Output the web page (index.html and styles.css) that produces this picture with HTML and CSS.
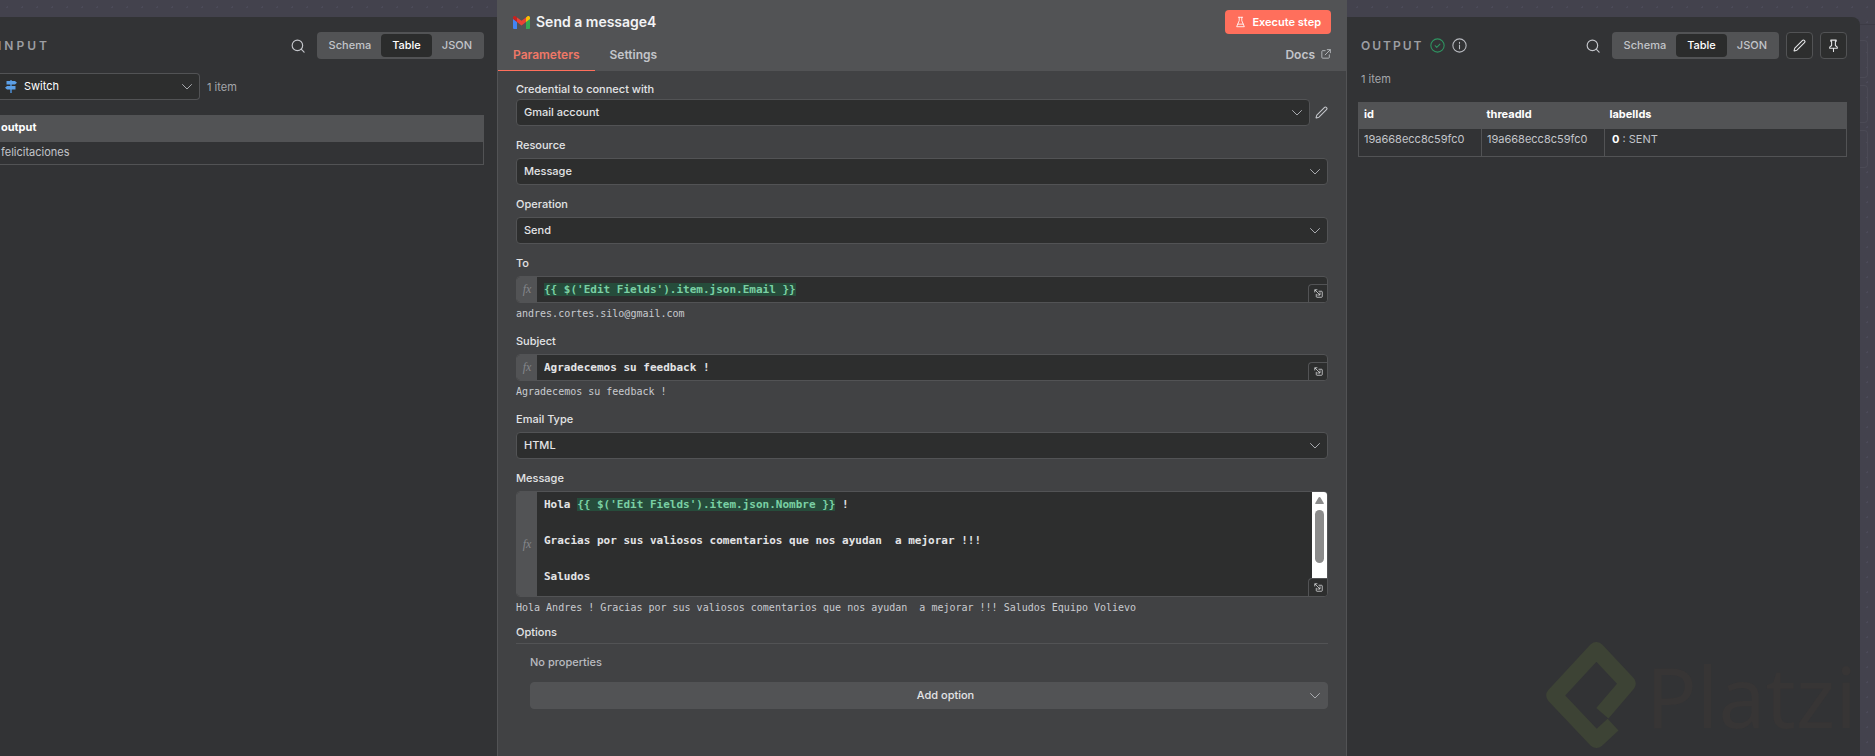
FILE: index.html
```
<!DOCTYPE html>
<html lang="es">
<head>
    <meta charset="UTF-8">
    <meta name="viewport" content="width=device-width, initial-scale=1.0">
    <title>Send a message4</title>
    <link rel="stylesheet" href="styles.css">
</head>
<body>
    <!-- Shared icons -->
    <svg class="sprite" aria-hidden="true">
        <symbol id="chevron" viewBox="0 0 12 12"><path d="M1.500 3.500 6 8l4.500-4.500"/></symbol>
        <symbol id="search" viewBox="0 0 24 24"><circle cx="11" cy="11" r="9"/><path d="m22.500 22.500-5-5"/></symbol>
        <symbol id="pencil" viewBox="0 0 24 24"><path d="M21.200 6.800a2.800 2.800 0 0 0-4-4L3.800 16.200a2 2 0 0 0-.5.8L2 21.400a.5.5 0 0 0 .6.6l4.400-1.300a2 2 0 0 0 .8-.5z"/></symbol>
        <symbol id="popout" viewBox="0 0 12 12"><path d="M6.500 3H10a1 1 0 0 1 1 1v6a1 1 0 0 1-1 1H4a1 1 0 0 1-1-1V7M1 4V1h3M1.500 1.500l6 6M8 5v3H5"/></symbol>
    </svg>

    <div class="canvas">
        <div class="canvas-nodes" aria-hidden="true"><i></i><i></i><i></i></div>

        <div class="details">
            <section class="panel input-panel">
                <header class="panel-header">
                    <h2>INPUT</h2>
                    <button class="icon-button push" aria-label="Search"><svg><use href="#search"/></svg></button>
                    <div class="tabs">
                        <button>Schema</button>
                        <button class="active">Table</button>
                        <button>JSON</button>
                    </div>
                </header>
                <div class="source">
                    <div class="select source-select">
                        <svg class="switch-icon" viewBox="0 0 12 13"><path d="M6 0v13" stroke="#4d8fd6" stroke-width="1.500"/><path d="M1.500 1H10l2 1.750-2 1.750H1.500zM10.500 6H2L0 7.750 2 9.500h8.500z" fill="#5c9fe6"/></svg>
                        <select aria-label="Input node"><option>Switch</option></select>
                        <svg class="chevron"><use href="#chevron"/></svg>
                    </div>
                    <span>1 item</span>
                </div>
                <table class="input-table">
                    <thead><tr><th>output</th></tr></thead>
                    <tbody><tr><td>felicitaciones</td></tr></tbody>
                </table>
            </section>

            <main class="node">
                <header class="node-header">
                    <div class="node-title">
                        <svg class="gmail" viewBox="0 0 17 13">
                            <path d="M0 2.500V12a1 1 0 0 0 1 1h3V5.500z" fill="#4285f4"/>
                            <path d="M13 13h3a1 1 0 0 0 1-1V2.500l-4 3z" fill="#34a853"/>
                            <path d="M13 1.500v4.500l4-3V1.700C17 .2 15.300-.5 14.200.5z" fill="#fbbc04"/>
                            <path d="M4 6V1.500l4.500 3.300L13 1.500V6L8.500 9.400z" fill="#ea4335"/>
                            <path d="M0 1.700V3l4 3V1.500L2.800.5C1.700-.5 0 .2 0 1.700z" fill="#c5221f"/>
                        </svg>
                        <h1>Send a message4</h1>
                        <button class="execute">
                            <svg viewBox="0 0 12 14"><path d="M3.500 1.500h5M4.500 1.500v4L1.500 12.500h9L7.500 5.500v-4M3 9.500h6"/></svg>
                            Execute step
                        </button>
                    </div>
                    <nav class="node-nav">
                        <a href="#parameters" class="active">Parameters</a>
                        <a href="#settings">Settings</a>
                        <a href="#docs" class="docs">Docs
                            <svg viewBox="0 0 12 12"><path d="M5 2H2a1 1 0 0 0-1 1v7a1 1 0 0 0 1 1h7a1 1 0 0 0 1-1V7M7.500.8h3.700v3.700M11 1 5 7"/></svg>
                        </a>
                    </nav>
                </header>

                <form class="parameters" id="parameters">
                    <div class="field credential">
                        <label for="credential">Credential to connect with</label>
                        <div class="credential-row">
                            <div class="select">
                                <select id="credential"><option>Gmail account</option></select>
                                <svg class="chevron"><use href="#chevron"/></svg>
                            </div>
                            <button type="button" class="icon-button" aria-label="Edit credential"><svg><use href="#pencil"/></svg></button>
                        </div>
                    </div>
                    <div class="field">
                        <label for="resource">Resource</label>
                        <div class="select">
                            <select id="resource"><option>Message</option></select>
                            <svg class="chevron"><use href="#chevron"/></svg>
                        </div>
                    </div>
                    <div class="field">
                        <label for="operation">Operation</label>
                        <div class="select">
                            <select id="operation"><option>Send</option></select>
                            <svg class="chevron"><use href="#chevron"/></svg>
                        </div>
                    </div>
                    <div class="field">
                        <label id="to-label">To</label>
                        <div class="expression">
                            <span class="fx">fx</span>
                            <div class="code" role="textbox" contenteditable="true" spellcheck="false" aria-labelledby="to-label"><mark>{{ $('Edit Fields').item.json.Email }}</mark></div>
                            <button type="button" class="expand" aria-label="Open editor"><svg><use href="#popout"/></svg></button>
                        </div>
                        <output>andres.cortes.silo@gmail.com</output>
                    </div>
                    <div class="field">
                        <label for="subject">Subject</label>
                        <div class="expression">
                            <span class="fx">fx</span>
                            <input class="code" id="subject" type="text" value="Agradecemos su feedback !">
                            <button type="button" class="expand" aria-label="Open editor"><svg><use href="#popout"/></svg></button>
                        </div>
                        <output>Agradecemos su feedback !</output>
                    </div>
                    <div class="field">
                        <label for="email-type">Email Type</label>
                        <div class="select">
                            <select id="email-type"><option>HTML</option></select>
                            <svg class="chevron"><use href="#chevron"/></svg>
                        </div>
                    </div>
                    <div class="field">
                        <label id="message-label">Message</label>
                        <div class="expression message">
                            <span class="fx">fx</span>
                            <div class="code" role="textbox" aria-multiline="true" contenteditable="true" spellcheck="false" aria-labelledby="message-label"><div>Hola <mark>{{ $('Edit Fields').item.json.Nombre }}</mark> !</div><div><br></div><div>Gracias por sus valiosos comentarios que nos ayudan  a mejorar !!!</div><div><br></div><div>Saludos</div></div>
                            <div class="scrollbar" aria-hidden="true">
                                <svg viewBox="0 0 9 7"><path d="M4.500 0C5 0 5.300.3 5.600.8L8.700 6c.3.6 0 1-.6 1H.9C.3 7 0 6.600.3 6L3.400.8C3.700.3 4 0 4.500 0z"/></svg>
                                <span class="thumb"></span>
                            </div>
                            <button type="button" class="expand" aria-label="Open editor"><svg><use href="#popout"/></svg></button>
                        </div>
                        <output>Hola Andres ! Gracias por sus valiosos comentarios que nos ayudan  a mejorar !!! Saludos Equipo Volievo</output>
                    </div>
                    <section class="options">
                        <h3>Options</h3>
                        <div class="options-body">
                            <p>No properties</p>
                            <div class="select add-option">
                                <select aria-label="Add option"><option>Add option</option></select>
                                <svg class="chevron"><use href="#chevron"/></svg>
                            </div>
                        </div>
                    </section>
                </form>
            </main>

            <section class="panel output-panel">
                <header class="panel-header">
                    <h2>OUTPUT</h2>
                    <svg class="status success" viewBox="0 0 14 14"><circle cx="7" cy="7" r="6.200"/><path d="m4.800 7.200 1.500 1.500 3-3"/></svg>
                    <svg class="status" viewBox="0 0 14 14"><circle cx="7" cy="7" r="6.200"/><path d="M7 6.500V10M7 4v1"/></svg>
                    <button class="icon-button push" aria-label="Search"><svg><use href="#search"/></svg></button>
                    <div class="tabs">
                        <button>Schema</button>
                        <button class="active">Table</button>
                        <button>JSON</button>
                    </div>
                    <button class="square" aria-label="Edit output"><svg><use href="#pencil"/></svg></button>
                    <button class="square" aria-label="Pin data"><svg viewBox="0 0 24 24"><path d="M12 17v6M5 17h14v-2l-3.500-3V4H17V2H7v2h1.500v8L5 15z"/></svg></button>
                </header>
                <p class="count">1 item</p>
                <table class="output-table">
                    <thead><tr><th>id</th><th>threadId</th><th>labelIds</th></tr></thead>
                    <tbody><tr><td>19a668ecc8c59fc0</td><td>19a668ecc8c59fc0</td><td><b>0</b> : SENT</td></tr></tbody>
                </table>
            </section>
        </div>

        <div class="watermark">
            <svg viewBox="130 98 268 320"><path d="m298 311 76-89-94-100-126 136 126 133 50-46"/></svg>
            <span>Platzi</span>
        </div>
    </div>
</body>
</html>
```
FILE: styles.css
```
* {
    box-sizing: border-box;
}

body {
    margin: 0;
    font-family: Inter, "Open Sans", sans-serif;
    font-size: 11px;
    line-height: 18px;
    color: #e3e4e6;
    background-color: #43424d;
}

h1, h2, h3, p {
    margin: 0;
}

button, select, input {
    margin: 0;
    padding: 0;
    border: none;
    font: inherit;
    color: inherit;
    background: none;
}

svg {
    display: block;
    flex: none;
    width: 14px;
    height: 14px;
    fill: none;
    stroke: currentColor;
    stroke-linecap: round;
    stroke-linejoin: round;
}

.sprite {
    display: none;
}

.canvas {
    position: relative;
    min-height: 100vh;
    overflow: hidden;
    background-image: radial-gradient(#4b4a58 1px, transparent 1px);
    background-size: 15px 15px;
}

/* Nodes of the workflow that show behind the panels */
.canvas-nodes {
    position: absolute;
    top: 24px;
    right: 0;
    width: 15px;
    padding-top: 15px;
    border-top: 1px solid #3c3b45;
}

.canvas-nodes i {
    display: block;
    width: 8px;
    height: 38px;
    margin-bottom: 7px;
    border: 1px solid #4b4a55;
    border-left: none;
    border-radius: 0 4px 4px 0;
}

.details {
    position: relative;
    display: grid;
    grid-template-columns: 497fr 850fr 513fr;
    min-height: 100vh;
    padding-right: 15px;
}

/* Side panels */
.panel {
    margin-top: 17px;
    background-color: #323335;
    color: #c3c5ca;
}

.input-panel {
    padding: 15px 13px 0 0;
}

.output-panel {
    padding: 15px 13px 0 11px;
    border-radius: 0 8px 0 0;
}

.panel-header {
    display: flex;
    align-items: center;
    gap: 7px;
}

.panel-header h2 {
    font-size: 12px;
    font-weight: 600;
    letter-spacing: 3px;
    color: #9c9ea3;
}

.input-panel h2 {
    margin-left: -2px;
}

.output-panel h2 {
    margin-left: 3px;
    letter-spacing: 2px;
}

.push {
    margin-left: auto;
    margin-right: 5px;
}

.icon-button {
    color: #c3c5ca;
}

.icon-button svg {
    stroke-width: 2px;
}

.status {
    width: 15px;
    height: 15px;
    color: #b9bbc0;
}

.success {
    color: #2f9461;
}

.tabs {
    display: flex;
    height: 27px;
    padding: 2px;
    border-radius: 4px;
    background-color: #525355;
    font-weight: 500;
}

.tabs button {
    height: 23px;
    padding: 0 10px 2px;
    border-radius: 4px;
}

.tabs .active {
    padding: 0 11px 2px;
    background-color: #2b2c2c;
    color: #fff;
}

.square {
    display: grid;
    place-items: center;
    width: 27px;
    height: 27px;
    border: 1px solid #525355;
    border-radius: 4px;
    background-color: #2d2e2e;
    color: #e3e4e6;
}

.square svg {
    width: 13px;
    height: 13px;
    stroke-width: 2px;
}

.source {
    display: flex;
    align-items: center;
    gap: 7px;
    margin: 14px 0 15px;
    color: #a4a6ab;
}

.count {
    margin: 11px 0 14px 3px;
    color: #a4a6ab;
}

/* Dropdowns: the select and its icons share one grid cell */
.select {
    display: grid;
    align-items: center;
}

.select > * {
    grid-area: 1 / 1;
}

.select select {
    appearance: none;
    width: 100%;
    height: 27px;
    padding: 0 24px 1px 7px;
    border: 1px solid #525355;
    border-radius: 4px;
    background-color: #2d2e2e;
    font-weight: 500;
}

.chevron {
    justify-self: end;
    width: 12px;
    height: 12px;
    margin-right: 7px;
    color: #a8aaae;
    pointer-events: none;
}

.source-select {
    width: 200px;
    color: #fff;
}

.source-select select {
    padding-left: 24px;
    border-left: none;
    border-radius: 0 4px 4px 0;
    font-weight: 400;
}

.switch-icon {
    z-index: 1;
    width: 12px;
    height: 13px;
    margin-left: 5px;
    stroke: none;
}

/* Data tables */
table {
    width: 100%;
    border: 1px solid #525355;
    border-collapse: collapse;
}

th {
    padding: 2px 5px 5px;
    background-color: #525355;
    color: #fff;
    font-weight: 700;
    text-align: left;
}

td {
    padding: 1px 5px 3px;
    border: 1px solid #525355;
    vertical-align: top;
}

.input-table,
.input-table td {
    border-left: none;
}

.input-table th,
.input-table td {
    padding-left: 1px;
}

.output-table th:not(:last-child) {
    width: 123px;
}

.output-table td {
    padding-bottom: 8px;
}

.output-table b {
    margin-left: 2px;
    color: #fff;
}

/* Node settings */
.node {
    border: 1px solid #525355;
    border-width: 0 1px;
    background-color: #414244;
}

.node-header {
    padding-top: 10px;
    background-color: #525355;
}

.node-title {
    display: flex;
    align-items: center;
    gap: 6px;
    padding: 0 15px;
}

.gmail {
    width: 17px;
    height: 13px;
    stroke: none;
}

.node-title h1 {
    font-size: 14px;
    font-weight: 600;
    line-height: 24px;
    color: #f2f3f5;
}

.execute {
    display: flex;
    align-items: center;
    gap: 6px;
    height: 24px;
    margin-left: auto;
    padding: 0 10px;
    border-radius: 4px;
    background-color: #ff6f5c;
    color: #fff;
    font-weight: 600;
}

.execute svg {
    width: 11px;
    height: 12px;
}

.node-nav {
    display: flex;
    margin-top: 8px;
    font-size: 12px;
    font-weight: 600;
}

.node-nav a {
    height: 29px;
    padding: 4px 15px 0;
    color: #c3c5ca;
    text-decoration: none;
}

.node-nav .active {
    border-bottom: 1px solid #ff6f5c;
    color: #f07867;
}

.node-nav .docs {
    display: flex;
    gap: 6px;
    margin-left: auto;
}

.docs svg {
    width: 10px;
    height: 10px;
    margin-top: 3px;
}

.parameters {
    display: grid;
    gap: 10px;
    padding: 9px 18px;
}

.field {
    display: grid;
    gap: 4px;
}

.field label,
.options h3 {
    font-size: 11px;
    font-weight: 500;
}

.credential {
    gap: 1px;
}

.credential-row {
    display: grid;
    grid-template-columns: 1fr 13px;
    gap: 5px;
}

.credential-row .icon-button svg {
    width: 13px;
    height: 13px;
}

.expression {
    position: relative;
    display: flex;
    height: 27px;
    border: 1px solid #525355;
    border-radius: 4px;
    overflow: hidden;
    background-color: #2d2e2e;
}

.fx {
    display: grid;
    place-items: center;
    flex: none;
    width: 20px;
    background-color: #525355;
    color: #85878b;
    font: italic 12px "Liberation Serif", serif;
}

.code {
    flex: 1;
    padding: 4px 7px;
    outline: none;
    font: 700 11px/18px "DejaVu Sans Mono", monospace;
    white-space: pre;
}

.code mark {
    background-color: #264c3b;
    color: #7ad0a4;
}

.expand {
    position: absolute;
    right: 0;
    bottom: 0;
    display: grid;
    place-items: center;
    width: 19px;
    height: 18px;
    border: 1px solid #525355;
    border-width: 1px 0 0 1px;
    border-radius: 4px 0 0 0;
    background-color: #2d2e2e;
}

.expand svg {
    width: 9px;
    height: 9px;
}

.message {
    height: 106px;
}

.scrollbar {
    width: 15px;
    height: 86px;
    padding: 5px 3px;
    background-color: #fff;
}

.scrollbar svg {
    width: 9px;
    height: 7px;
    fill: #8b8b8b;
    stroke: none;
}

.thumb {
    display: block;
    height: 53px;
    margin-top: 6px;
    border-radius: 5px;
    background-color: #8b8b8b;
}

.field output {
    margin: -3px 0 -2px;
    font: 10px/20px "DejaVu Sans Mono", monospace;
    white-space: pre;
    color: #c9cbd0;
}

.options {
    margin-top: -3px;
}

.options h3 {
    padding-bottom: 2px;
    border-bottom: 1px solid #525355;
}

.options-body {
    padding: 9px 0 0 14px;
    color: #b9bbc0;
    font-weight: 500;
}

.add-option {
    margin-top: 11px;
}

.add-option select {
    padding: 0 7px 1px 40px;
    background-color: #525355;
    color: #e3e4e6;
    text-align: center;
    text-align-last: center;
}

/* Brand mark laid over the page */
.watermark {
    position: absolute;
    right: 18px;
    bottom: 7px;
    display: flex;
    align-items: center;
    gap: 10px;
    pointer-events: none;
}

.watermark svg {
    width: 90px;
    height: 107px;
    stroke: #3d4335;
    stroke-width: 48px;
    stroke-linecap: butt;
}

.watermark span {
    font: 84px/100px "Noto Sans", sans-serif;
    color: #373535;
}
```
